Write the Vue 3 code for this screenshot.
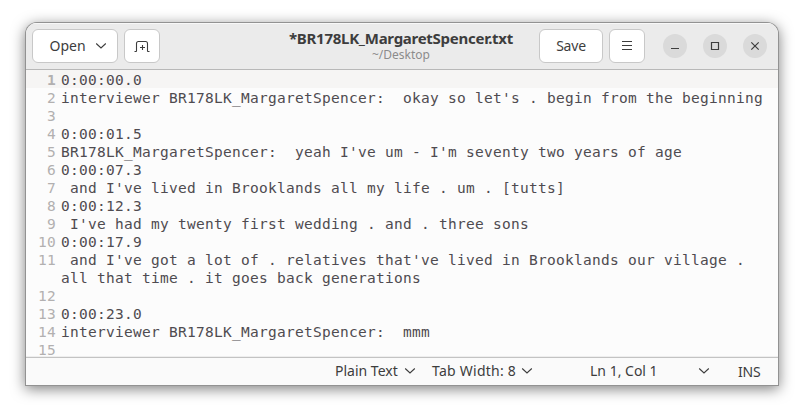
<script setup>
const lines = [
  { n: 1, text: '0:00:00.0' },
  { n: 2, text: "interviewer BR178LK_MargaretSpencer:  okay so let's . begin from the beginning" },
  { n: 3, text: '' },
  { n: 4, text: '0:00:01.5' },
  { n: 5, text: "BR178LK_MargaretSpencer:  yeah I've um - I'm seventy two years of age" },
  { n: 6, text: '0:00:07.3' },
  { n: 7, text: " and I've lived in Brooklands all my life . um . [tutts]" },
  { n: 8, text: '0:00:12.3' },
  { n: 9, text: " I've had my twenty first wedding . and . three sons" },
  { n: 10, text: '0:00:17.9' },
  { n: 11, text: " and I've got a lot of . relatives that've lived in Brooklands our village .\nall that time . it goes back generations" },
  { n: 12, text: '' },
  { n: 13, text: '0:00:23.0' },
  { n: 14, text: 'interviewer BR178LK_MargaretSpencer:  mmm' },
  { n: 15, text: '' },
]
</script>

<template>
  <div class="desktop">
    <div class="window">
      <header class="bar">
        <button class="btn open">
          <span class="open-label">Open</span>
          <svg class="chev" width="12" height="8" viewBox="0 0 12 8"><path d="M1.2 1.5 6 6l4.800-4.500" /></svg>
        </button>
        <button class="btn square">
          <svg width="16" height="14" viewBox="0 0 16 14"><path d="M.5 12.500h1.500q.5 0 .5-.5V4.500q0-2 2-2h7q2 0 2 2V12q0 .5.5.5h1.500M8.500 6v5M6 8.500h5" /></svg>
        </button>
        <div class="title">
          <div class="name">*BR178LK_MargaretSpencer.txt</div>
          <div class="path">~/Desktop</div>
        </div>
        <button class="btn save"><span>Save</span></button>
        <button class="btn square">
          <svg width="12" height="12" viewBox="0 0 12 12"><path d="M1 1.500h10M1 5.500h10M1 9.500h10" /></svg>
        </button>
        <div class="controls">
          <button class="round"><svg width="10" height="10" viewBox="0 0 10 10"><path d="M1 7.500h8" /></svg></button>
          <button class="round"><svg width="10" height="10" viewBox="0 0 10 10"><path d="M1.500 1.500h7v7h-7z" /></svg></button>
          <button class="round"><svg width="10" height="10" viewBox="0 0 10 10"><path d="m1.300 1.300 7.400 7.400m0-7.400L1.300 8.700" /></svg></button>
        </div>
      </header>
      <main class="editor">
        <div v-for="line in lines" :key="line.n" class="line" :class="{ current: line.n === 1 }">
          <span class="num">{{ line.n }}</span>
          <span class="text">{{ line.text }}</span>
        </div>
      </main>
      <footer class="status">
        <span class="lang">Plain Text</span>
        <svg class="chev" width="12" height="8" viewBox="0 0 12 8"><path d="M1.200 1.500 6 6l4.800-4.500" /></svg>
        <span class="tab">Tab Width: 8</span>
        <svg class="chev" width="12" height="8" viewBox="0 0 12 8"><path d="M1.200 1.500 6 6l4.800-4.500" /></svg>
        <span class="pos">Ln 1, Col 1</span>
        <svg class="chev" width="12" height="8" viewBox="0 0 12 8"><path d="M1.200 1.500 6 6l4.800-4.500" /></svg>
        <span class="ins">INS</span>
      </footer>
    </div>
  </div>
</template>

<style>
body { margin: 0; background: #fff; }
</style>

<style scoped>
* { box-sizing: border-box; }
.desktop {
  width: 804px;
  height: 414px;
  padding: 23px 26px 29px;
  overflow: hidden;
  background: #fff;
  font-family: "Noto Sans", "Open Sans", sans-serif;
  color: #3d3d3d;
}
.window {
  display: flex;
  flex-direction: column;
  width: 752px;
  height: 362px;
  overflow: hidden;
  border-radius: 11px 11px 0 0;
  background: #fcfcfc;
  box-shadow: 0 0 0 1px #929292, 0 3px 14px 1px rgba(0, 0, 0, .5);
}
svg { display: block; fill: none; stroke: #3d3d3d; stroke-width: 1.1; flex: none; }
.bar {
  display: flex;
  align-items: center;
  flex: none;
  height: 47px;
  padding: 0 11px 0 6px;
  background: #ebebeb;
  border-bottom: 1px solid #b8b8b8;
  box-shadow: inset 0 1px #f8f8f8;
}
.btn {
  display: flex;
  align-items: center;
  justify-content: center;
  flex: none;
  height: 34px;
  padding: 0;
  border: 1px solid #c8c8c8;
  border-radius: 6px;
  background: #fff;
  font: 14px/20px "Noto Sans", sans-serif;
  color: #3d3d3d;
}
.open { width: 86px; gap: 9px; padding-left: 6px; }
.square { width: 36px; margin-left: 6px; }
.save { width: 64px; letter-spacing: -.2px; }
.title { flex: 1; text-align: center; white-space: nowrap; padding-left: 103px; }
.name { font-size: 15px; line-height: 17px; font-weight: 700; letter-spacing: -.27px; }
.path { font-size: 12px; line-height: 15px; color: #8b8b8b; }
.controls { display: flex; gap: 16px; margin-left: 18px; }
.round {
  display: flex;
  align-items: center;
  justify-content: center;
  width: 24px;
  height: 24px;
  padding: 0;
  border: 0;
  border-radius: 50%;
  background: #dadada;
}
.round svg { stroke-width: 1.2; }
.editor {
  flex: 1;
  min-height: 0;
  overflow: hidden;
  font: 14.5px/18px "DejaVu Sans Mono", monospace;
  letter-spacing: .27px;
  color: #4f4b50;
}
.line { display: flex; min-height: 19px; padding-top: 1px; margin-bottom: -1px; }
.current { height: 18px; min-height: 0; margin-bottom: 0; background: #f6f5f4; }
.num { width: 30px; flex: none; text-align: right; color: #b2b0b0; margin-right: 5px; }
.current .num { font-weight: 700; }
.text { white-space: pre; }
.status {
  display: flex;
  align-items: center;
  flex: none;
  height: 28px;
  padding-bottom: 1px;
  border-top: 1px solid #c3c3c3;
  box-shadow: 0 -1px #eeeeee;
  background: #fafafa;
  font-size: 14px;
  line-height: 20px;
  white-space: nowrap;
}
.lang { width: 69px; margin-left: 309px; }
.tab { width: 89px; margin-left: 16px; letter-spacing: .25px; }
.pos { width: 108px; margin-left: 57px; }
.ins { margin-left: 28px; padding-top: 2px; letter-spacing: -.2px; }
</style>
